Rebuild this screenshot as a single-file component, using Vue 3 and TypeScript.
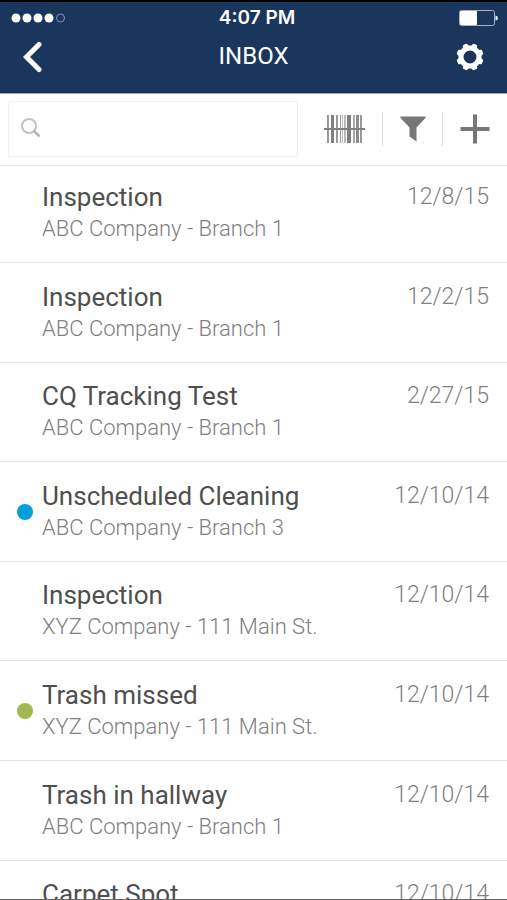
<script setup lang="ts">
import { ref } from 'vue'

interface Task {
  id: number
  title: string
  site: string
  date: string
  status?: 'blue' | 'green'
}

const query = ref('')

const tasks: Task[] = [
  { id: 1, title: 'Inspection', site: 'ABC Company - Branch 1', date: '12/8/15' },
  { id: 2, title: 'Inspection', site: 'ABC Company - Branch 1', date: '12/2/15' },
  { id: 3, title: 'CQ Tracking Test', site: 'ABC Company - Branch 1', date: '2/27/15' },
  { id: 4, title: 'Unscheduled Cleaning', site: 'ABC Company - Branch 3', date: '12/10/14', status: 'blue' },
  { id: 5, title: 'Inspection', site: 'XYZ Company - 111 Main St.', date: '12/10/14' },
  { id: 6, title: 'Trash missed', site: 'XYZ Company - 111 Main St.', date: '12/10/14', status: 'green' },
  { id: 7, title: 'Trash in hallway', site: 'ABC Company - Branch 1', date: '12/10/14' },
  { id: 8, title: 'Carpet Spot', site: 'ABC Company - Branch 1', date: '12/10/14' },
]

// Barcode bars: x offset, width and shade
const bars: [number, number, string][] = [
  [3, 2, '#999'], [7, 3, '#808080'], [12, 2, '#999'], [16, 1, '#999'], [18, 1, '#bbb'],
  [20, 2, '#bbb'], [23, 4, '#808080'], [29, 2, '#aaa'], [32, 3, '#8c8c8c'], [36, 2, '#999'],
]
const teeth = [22.5, 67.5, 112.5, 157.5, 202.5, 247.5, 292.5, 337.5]
</script>

<template>
  <div class="screen">
    <header class="header">
      <div class="status">
        <svg class="signal" width="56" height="12" viewBox="0 0 56 12" aria-hidden="true">
          <circle v-for="n in 4" :key="n" :cx="n * 11 - 6" cy="6" r="4.5" fill="#fff" />
          <circle cx="49.500" cy="6" r="4" fill="none" stroke="#8497b2" />
        </svg>
        <span class="clock">4:07 PM</span>
        <svg class="battery" width="40" height="16" viewBox="0 0 40 16" aria-hidden="true">
          <rect x="0.500" y="0.500" width="35" height="15" rx="2" fill="none" stroke="#a6b3c6" />
          <rect x="1" y="1" width="17" height="14" rx="1" fill="#fff" />
          <path d="M36.500 5.500Q39 6 39 8T36.500 10.500Z" fill="#fff" />
        </svg>
      </div>
      <div class="nav">
        <button class="icon-button" type="button" aria-label="Back">
          <svg width="20" height="32" viewBox="0 0 20 32">
            <path d="M16 3.500L3.500 16L16 28.500" fill="none" stroke="#fff" stroke-width="5" stroke-linecap="round" />
          </svg>
        </button>
        <h1 class="heading">INBOX</h1>
        <button class="icon-button" type="button" aria-label="Settings">
          <svg width="28" height="28" viewBox="0 0 28 28">
            <circle cx="14" cy="14" r="9" fill="none" stroke="#fff" stroke-width="5" />
            <path
              v-for="angle in teeth"
              :key="angle"
              d="M10.500 4L11.800 0.600Q14 0.100 16.200 0.600L17.500 4Z"
              fill="#fff"
              :transform="`rotate(${angle} 14 14)`"
            />
          </svg>
        </button>
      </div>
    </header>

    <div class="toolbar">
      <label class="search">
        <svg width="20" height="20" viewBox="0 0 20 20" aria-hidden="true">
          <circle cx="8" cy="8" r="7" fill="none" stroke="#c2c2c2" stroke-width="2" />
          <path d="M13 13L18.500 18.500" stroke="#b5b5b5" stroke-width="2.500" />
        </svg>
        <input v-model="query" type="search" aria-label="Search inbox" />
      </label>
      <div class="tools">
        <button class="tool" type="button" aria-label="Scan barcode">
          <svg width="42" height="28" viewBox="0 0 42 28">
            <rect v-for="[x, w, shade] in bars" :key="x" :x="x" y="0" :width="w" height="28" :fill="shade" />
            <rect x="0" y="13" width="41" height="2" fill="#808080" />
          </svg>
        </button>
        <button class="tool" type="button" aria-label="Filter">
          <svg width="26" height="26" viewBox="0 0 26 26">
            <path d="M0.500 0.500H25.500V2L16.500 11.500V25.500L9.500 20.500V11.500L0.500 2Z" fill="#777" />
          </svg>
        </button>
        <button class="tool" type="button" aria-label="Add">
          <svg width="30" height="30" viewBox="0 0 30 30">
            <path d="M15 0.500V29.500M0.500 15H29.500" stroke="#777" stroke-width="4" />
          </svg>
        </button>
      </div>
    </div>

    <ul class="list">
      <li v-for="task in tasks" :key="task.id" class="row">
        <span class="marker"><i v-if="task.status" class="dot" :class="task.status"></i></span>
        <div class="body">
          <h2 class="title">{{ task.title }}</h2>
          <p class="site">{{ task.site }}</p>
        </div>
        <time class="date">{{ task.date }}</time>
      </li>
    </ul>
  </div>
</template>

<style>
body {
  margin: 0;
  background: #fff;
}
</style>

<style scoped>
.screen {
  box-sizing: border-box;
  display: flex;
  flex-direction: column;
  height: 100vh;
  overflow: hidden;
  border-bottom: 1px solid #666;
  font-family: Roboto, 'Liberation Sans', sans-serif;
}

button {
  display: flex;
  align-items: center;
  justify-content: center;
  padding: 0;
  border: 0;
  background: none;
  cursor: pointer;
}

svg {
  display: block;
}

.header {
  flex: none;
  border-top: 2px solid #000;
  border-bottom: 1px solid #9ba5bb;
  background: #1b365d;
  color: #fff;
}

.status {
  display: grid;
  grid-template-columns: 1fr auto 1fr;
  align-items: center;
  height: 32px;
  padding: 0 8px 0 11px;
}

.battery {
  justify-self: end;
}

.clock {
  padding-left: 4px;
  font-family: Inter, Roboto, sans-serif;
  font-size: 19px;
  font-weight: 600;
  line-height: 24px;
}

.nav {
  display: grid;
  grid-template-columns: 1fr auto 1fr;
  align-items: center;
  height: 46px;
  padding: 0 23px 13px;
}

.icon-button {
  justify-self: start;
}

.heading + .icon-button {
  justify-self: end;
}

.heading {
  margin: 0;
  padding-bottom: 2px;
  font-size: 24px;
  font-weight: 400;
  line-height: 28px;
}

.toolbar {
  display: flex;
  flex: none;
  gap: 26px;
  padding: 7px 17px 8px 8px;
  border-bottom: 1px solid #e8e8e8;
}

.search {
  box-sizing: border-box;
  display: flex;
  flex: 1;
  gap: 12px;
  align-items: center;
  min-width: 0;
  height: 56px;
  padding: 0 12px 2px;
  border: 1px solid #f0f0f0;
  border-radius: 2px;
}

.search input {
  flex: 1;
  min-width: 0;
  padding: 0;
  border: 0;
  outline: 0;
  background: none;
  color: #4a4a4a;
  font: 22px Roboto, sans-serif;
}

.tools {
  display: flex;
  align-items: center;
}

.tool + .tool {
  height: 34px;
  margin-left: 16px;
  padding-left: 17px;
  border-left: 1px solid #ddd;
}

.list {
  display: grid;
  flex: 1;
  grid-template-rows: 97px;
  grid-auto-rows: 100px 99px 100px 99px 100px;
  min-height: 0;
  margin: 0;
  padding: 0;
  overflow: hidden;
  list-style: none;
}

.row {
  display: flex;
  align-items: flex-end;
  padding: 0 18px 17px 17px;
  border-bottom: 1px solid #e4e4e4;
}

.marker {
  display: flex;
  flex: none;
  align-items: center;
  width: 25px;
  height: 64px;
}

.dot {
  width: 16px;
  height: 16px;
  border-radius: 50%;
}

.blue {
  background: #049fdb;
}

.green {
  background: #9fb850;
}

.body {
  flex: 1;
  min-width: 0;
}

.title,
.site {
  margin: 0;
  line-height: 32px;
  white-space: nowrap;
}

.title {
  color: #4f4f4f;
  font-size: 26px;
  font-weight: 400;
}

.site {
  color: #808080;
  font-size: 22px;
  font-weight: 300;
}

.date {
  height: 64px;
  color: #808080;
  font-size: 23px;
  font-weight: 300;
  line-height: 32px;
}
</style>
